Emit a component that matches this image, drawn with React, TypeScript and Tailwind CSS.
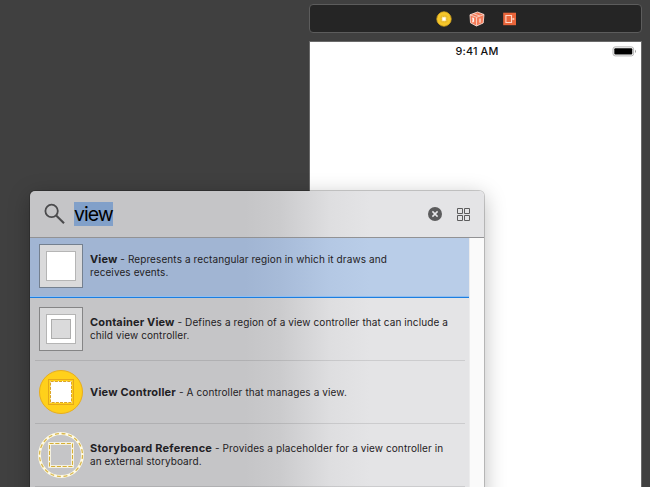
import type { ReactNode } from "react";

function Dock() {
  return (
    <div className="flex h-[29px] w-[333px] items-center justify-center gap-[17px] rounded-[4px] border border-[#5c5c5c] bg-[#252525] pl-[2px]">
      <svg width="16" height="16" viewBox="0 0 16 16">
        <circle cx="8" cy="8" r="7.2" fill="#f5c62b" stroke="#d9a81d" strokeWidth="0.8" />
        <rect x="5.2" y="5.2" width="5.6" height="5.6" fill="#f9d867" stroke="#dba91c" strokeWidth="0.9" strokeDasharray="1.2 .5" />
        <rect x="6.4" y="6.4" width="3.2" height="3.2" fill="#fff" />
      </svg>
      <svg width="16" height="16" viewBox="0 0 16 16">
        <path d="M1 3.8 8.5 1 15 3.5 14.2 12 7.4 15 1.5 11.8Z" fill="#f47b58" stroke="#fbdcd2" strokeWidth="0.9" strokeLinejoin="round" />
        <path d="m1 3.8 6.5 2.5L15 3.5M7.5 6.3v8.5M4.5 2.7l6.5 2.4" fill="none" stroke="#fbdcd2" strokeWidth="0.8" />
        <path d="M3 7.2h1.6v3.6H3M3 9h1.6M11 7.5v4.2" fill="none" stroke="#fff" strokeWidth="1" />
      </svg>
      <svg width="16" height="16" viewBox="0 0 16 16">
        <rect x="1.2" y="1.7" width="12.8" height="12.5" fill="#e9653a" />
        <path d="M9.5 6.2V4.5H3.9v7H9.5V9.7M9.5 6.2v4.1" fill="none" stroke="#ffd5c5" strokeWidth="1.1" />
        <path d="M9.9 8h1.4M10.9 7l1.5 1-1.5 1Z" fill="#ffd5c5" stroke="#ffd5c5" strokeWidth=".5" />
      </svg>
    </div>
  );
}

function Phone() {
  return (
    <div className="relative flex h-[446px] w-[333px] justify-center border-x border-t border-[#6a6a6a] bg-white">
      <span className="mt-[3px] ml-[3px] text-[10.8px] leading-[13px] font-medium tracking-[0.15px] text-[#111]">9:41 AM</span>
      <svg className="absolute top-[4px] right-[4px]" width="25" height="11" viewBox="0 0 25 11">
        <rect x="1" y="0.9" width="20.6" height="9" rx="2.2" fill="#fff" stroke="#b5b5b5" />
        <rect x="2.3" y="2.2" width="18" height="6.4" rx="1" fill="#000" />
        <path d="M23 3.8c1.3.5 1.3 2.7 0 3.2Z" fill="#999" />
      </svg>
    </div>
  );
}

function ViewIcon() {
  return (
    <svg width="46" height="46" viewBox="0 0 46 46">
      <rect x="1.5" y="1.5" width="43" height="43" fill="#dadadb" stroke="#74808f" />
      <rect x="8.5" y="8.5" width="29" height="29" fill="#fff" stroke="#b5b5b5" />
    </svg>
  );
}

function ContainerIcon() {
  return (
    <svg width="46" height="46" viewBox="0 0 46 46">
      <rect x="1.5" y="1.5" width="43" height="43" fill="#dadadb" stroke="#858586" />
      <rect x="8.5" y="8.5" width="29" height="29" fill="#fff" stroke="#b5b5b5" />
      <rect x="13.5" y="13.5" width="19" height="19" fill="#dadadb" stroke="#adadad" />
    </svg>
  );
}

function ControllerIcon() {
  return (
    <svg width="46" height="46" viewBox="0 0 46 46">
      <circle cx="23" cy="23" r="21.5" fill="#ffd01b" stroke="#e8ad1c" />
      <rect x="10.5" y="10.5" width="25" height="25" fill="#ffd01b" stroke="#e5a81b" />
      <rect x="12" y="12" width="22" height="22" fill="#fff" />
      <rect x="12.5" y="12.5" width="21" height="21" fill="none" stroke="#dca524" strokeDasharray="3.2 1" />
    </svg>
  );
}

function StoryboardIcon() {
  return (
    <svg width="46" height="46" viewBox="0 0 46 46">
      <circle cx="23" cy="23" r="21.5" fill="none" stroke="#fffbe5" strokeWidth="2.8" />
      <circle cx="23" cy="23" r="21.5" fill="none" stroke="#d8b64d" strokeWidth="1.3" strokeDasharray="4 2.75" />
      <rect x="11.5" y="11.5" width="23" height="23" fill="none" stroke="#fffbe5" strokeWidth="2.6" />
      <rect x="11.5" y="11.5" width="23" height="23" fill="none" stroke="#d5ae36" strokeWidth="1" strokeDasharray="4.2 1.55" />
    </svg>
  );
}

type RowProps = {
  icon: ReactNode;
  name: string;
  nameClass: string;
  first: string;
  firstClass: string;
  second?: string;
  secondClass?: string;
};

function RowContent({ icon, name, nameClass, first, firstClass, second, secondClass }: RowProps) {
  return (
    <>
      <div className="h-[46px] w-[46px] shrink-0">{icon}</div>
      <div className="ml-[6px] text-[10px] leading-[13px] whitespace-pre text-[#1f2124]">
        <div className="flex">
          <b className={nameClass}>{name}</b>
          <span className={firstClass}>{first}</span>
        </div>
        {second && <div className={secondClass}>{second}</div>}
      </div>
    </>
  );
}

function Library() {
  return (
    <div className="absolute top-[191px] left-[30px] flex h-[310px] w-[454px] flex-col overflow-hidden rounded-t-[5px] bg-[linear-gradient(90deg,#c5c5c7_0,#c5c5c7_215px,#cbcbcd_250px,#dedee0_300px,#e4e4e6_340px)] shadow-[0_0_0_1px_rgba(0,0,0,0.18),0_5px_22px_rgba(0,0,0,0.28)]">
      <div className="flex h-[47px] shrink-0 items-center border-b border-[#929294] pr-[14px] pl-[14px]">
        <svg width="24" height="24" viewBox="0 0 24 24" fill="none" stroke="#4b4b4d">
          <circle cx="7.6" cy="8.9" r="6.2" strokeWidth="1.8" />
          <path d="m12.2 13.5 7.8 7.8" strokeWidth="2.1" />
        </svg>
        <span className="ml-[6px] h-[24px] w-[39px] bg-[#81a0c9] text-[19.5px] leading-[24px] tracking-[-0.95px] whitespace-nowrap text-black">view</span>
        <svg className="ml-auto" width="14" height="14" viewBox="0 0 14 14">
          <circle cx="7" cy="7" r="7" fill="#5c5c5d" />
          <path d="m4.4 4.4 5.2 5.2m0-5.2L4.4 9.6" stroke="#e8e8ea" strokeWidth="1.5" />
        </svg>
        <svg className="ml-[14px]" width="14" height="14" viewBox="0 0 14 14" fill="none" stroke="#5c5c5d">
          <path d="M1.5 1.5h5v5h-5ZM8.5 1.5h5v5h-5ZM1.5 8.5h5v5h-5ZM8.5 8.5h5v5h-5Z" />
        </svg>
      </div>
      <div className="flex min-h-0 grow">
        <div className="w-[439px]">
          <div className="bg-[linear-gradient(90deg,#a1b5d3_0,#a1b5d3_215px,#a7bbd8_250px,#b4c8e4_300px,#b9cde8_340px)]">
            <div className="flex h-[58px] items-center pb-[2px] pl-[8px]">
              <RowContent icon={<ViewIcon />} name="View" nameClass="text-[11px] tracking-[0.1px]" first=" - Represents a rectangular region in which it draws and" firstClass="tracking-[0.1px]" second="receives events." secondClass="tracking-[0.1px]" />
            </div>
            <div className="h-px bg-[#8fbdf0]" />
            <div className="h-px bg-[#1c7ee0]" />
          </div>
          <div className="flex flex-col">
            <div className="mr-[4px] ml-[5px] flex h-[63px] items-center border-b border-black/10 pl-[3px]">
              <RowContent icon={<ContainerIcon />} name="Container View" nameClass="text-[11px] tracking-[0.14px]" first=" - Defines a region of a view controller that can include a" firstClass="tracking-[0.1px]" second="child view controller." secondClass="tracking-[0.1px]" />
            </div>
            <div className="mr-[4px] ml-[5px] flex h-[63px] items-center border-b border-black/10 pl-[3px]">
              <RowContent icon={<ControllerIcon />} name="View Controller" nameClass="text-[11px] tracking-[0.18px]" first=" - A controller that manages a view." firstClass="tracking-[0.11px]" />
            </div>
            <div className="mr-[4px] ml-[5px] flex h-[63px] items-center border-b border-black/10 pl-[3px]">
              <RowContent icon={<StoryboardIcon />} name="Storyboard Reference" nameClass="text-[11px] tracking-[0.2px]" first=" - Provides a placeholder for a view controller in" firstClass="tracking-[0.1px]" second="an external storyboard." secondClass="tracking-[0.08px]" />
            </div>
          </div>
        </div>
        <div className="w-[15px] border-l border-[#ececed] bg-[#fafafa]" />
      </div>
    </div>
  );
}

export default function App() {
  return (
    <div className="relative h-[487px] w-[650px] overflow-hidden bg-[#404040] font-['Inter','Liberation_Sans',sans-serif]">
      <main className="flex flex-col gap-[8px] pt-[4px] pl-[309px]">
        <Dock />
        <Phone />
      </main>
      <Library />
    </div>
  );
}
